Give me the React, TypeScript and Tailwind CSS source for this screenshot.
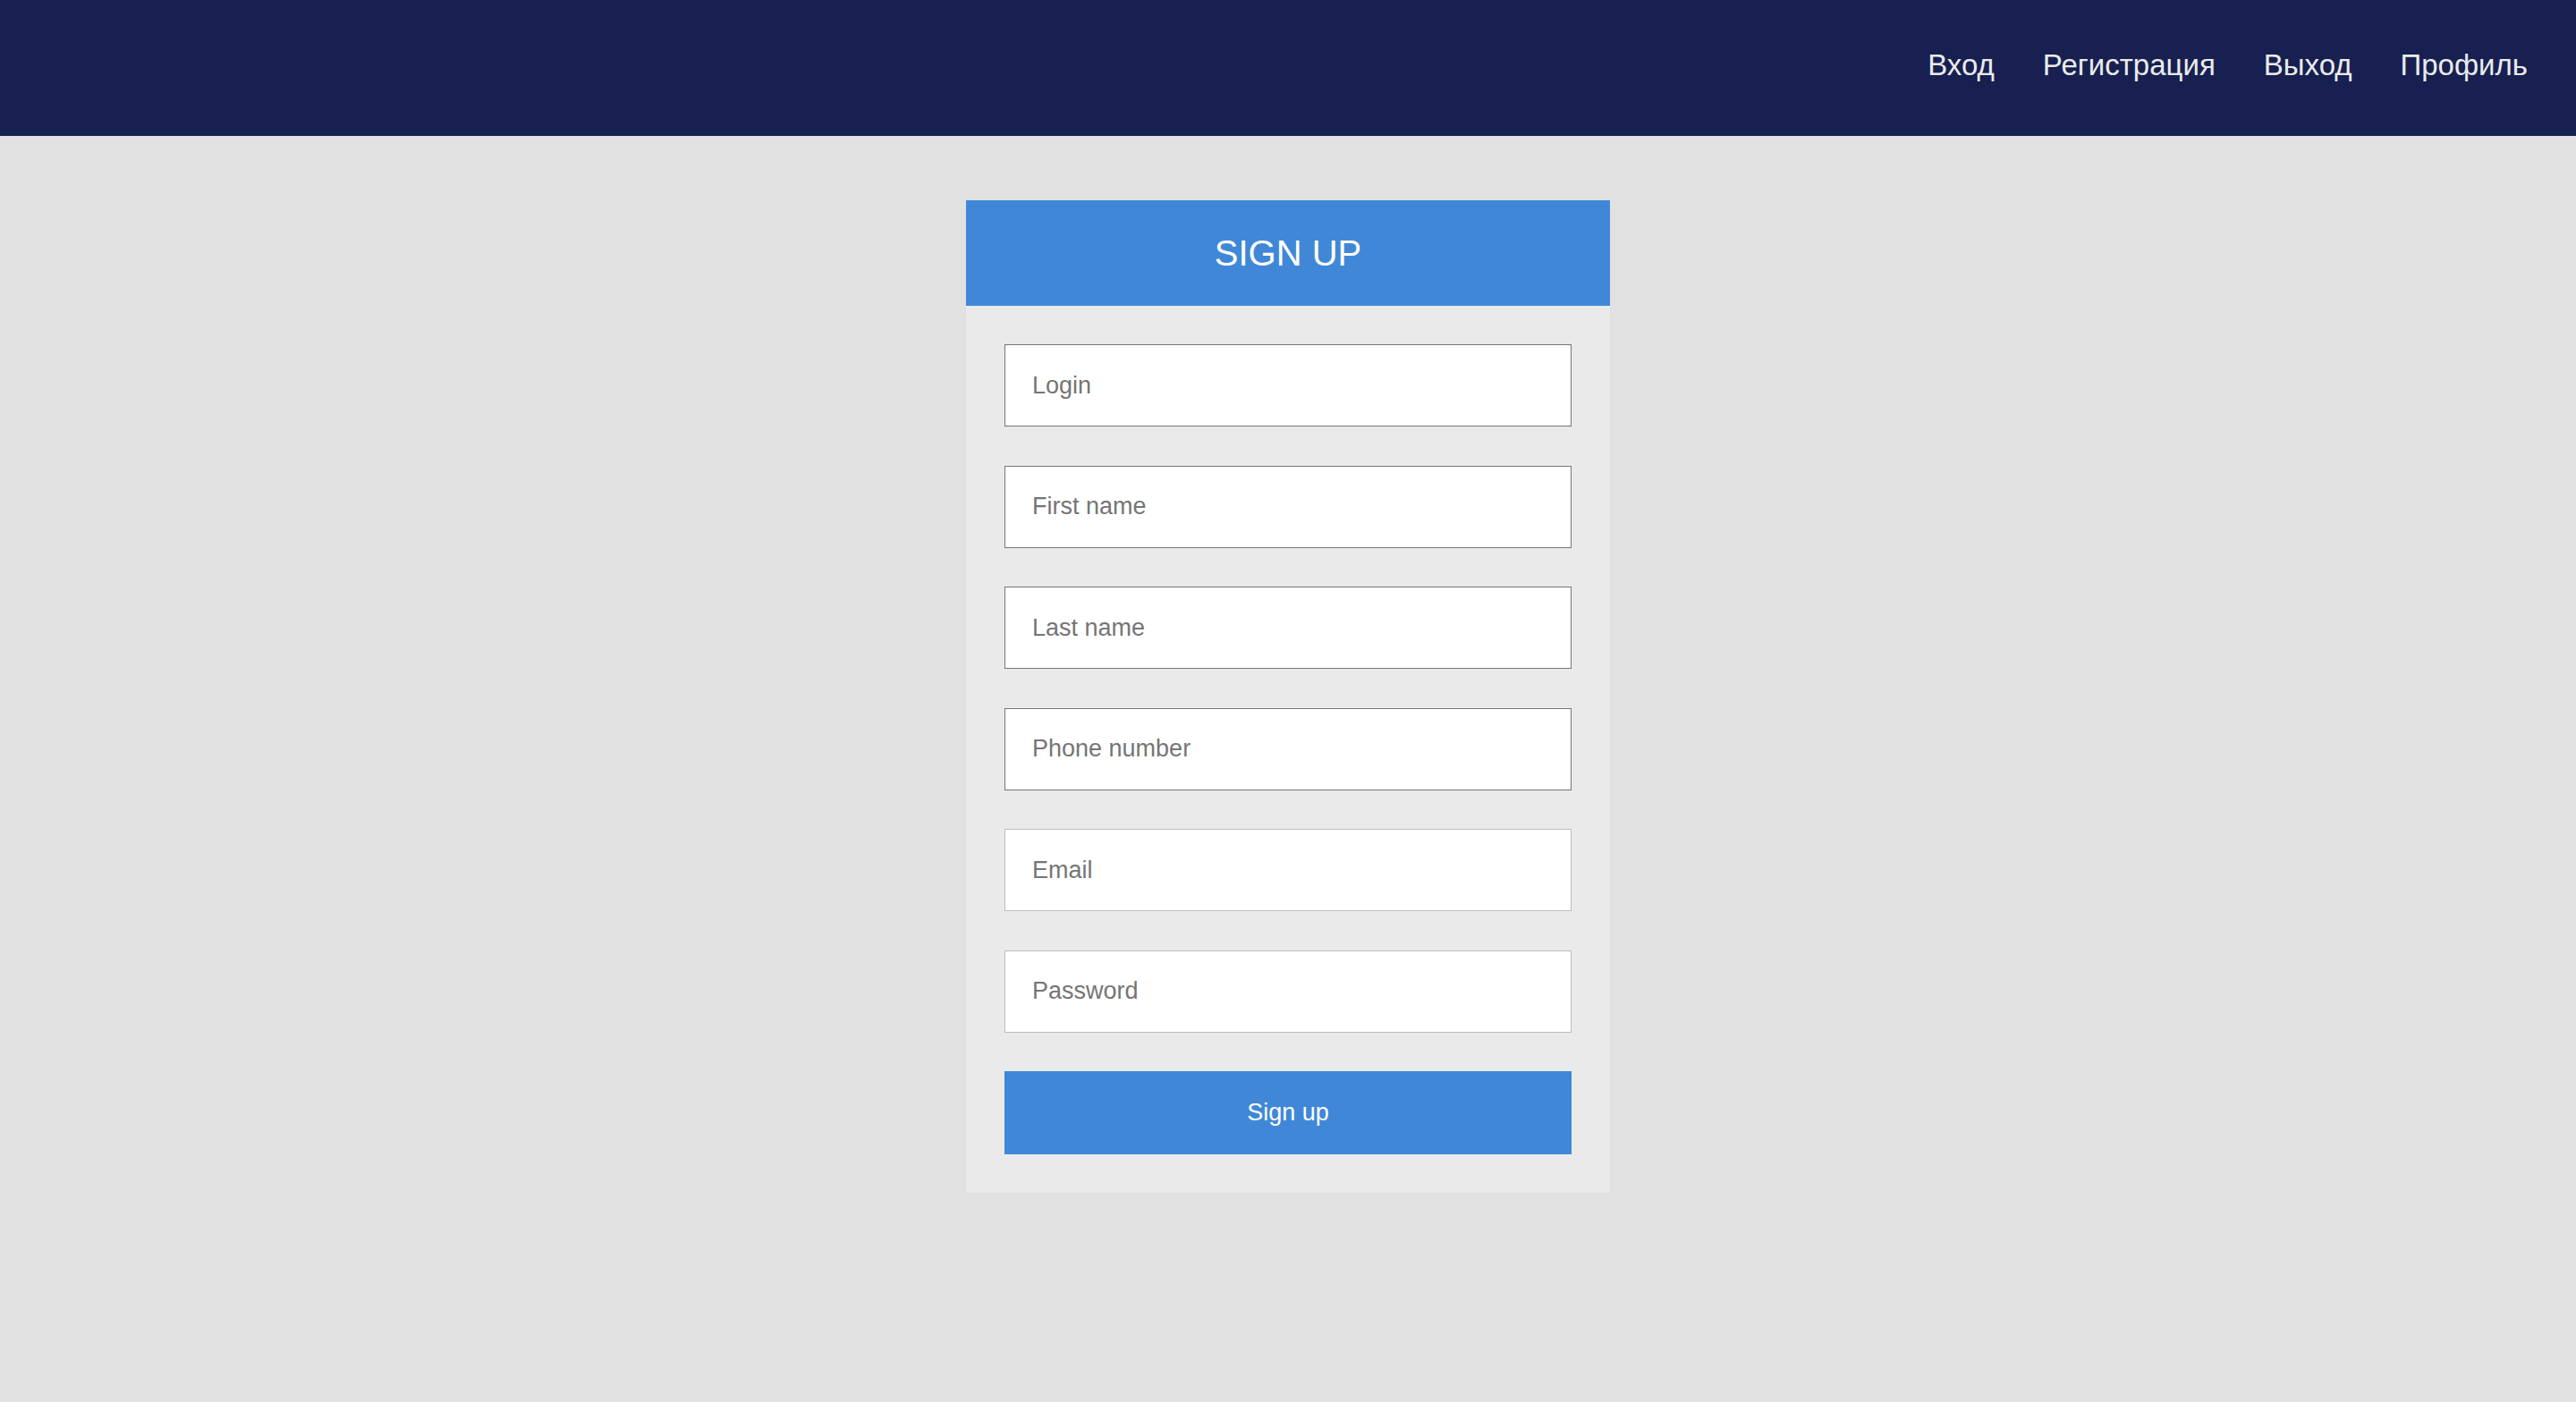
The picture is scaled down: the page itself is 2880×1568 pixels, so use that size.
import { useState } from "react";

const fields = [
  { name: "login", label: "Login", type: "text", dark: true },
  { name: "firstName", label: "First name", type: "text", dark: true },
  { name: "lastName", label: "Last name", type: "text", dark: true },
  { name: "phone", label: "Phone number", type: "tel", dark: true },
  { name: "email", label: "Email", type: "email", dark: false },
  { name: "password", label: "Password", type: "password", dark: false },
];

const links = ["Вход", "Регистрация", "Выход", "Профиль"];

export default function App() {
  const [values, setValues] = useState<Record<string, string>>({});

  return (
    <div className="min-h-screen bg-[#e1e1e1] font-['Liberation_Sans',Arial,sans-serif]">
      <header className="flex h-[152px] items-center justify-end bg-[#172051] pr-[27px]">
        <nav className="flex items-center text-[33px] text-[#ebebeb]">
          {links.map((l) => (
            <a key={l} href="#" className="px-[27px] pb-[7px]">
              {l}
            </a>
          ))}
        </nav>
      </header>

      <main className="flex justify-center pt-[72px]">
        <form
          className="w-[720px] bg-[#eaeaea]"
          onSubmit={(e) => e.preventDefault()}
        >
          <div className="flex h-[118px] items-center justify-center bg-[#4088d7] text-[40px] text-white">
            SIGN UP
          </div>

          <div className="flex flex-col gap-[43.5px] p-[43px]">
            {fields.map((f) => (
              <input
                key={f.name}
                type={f.type}
                placeholder={f.label}
                value={values[f.name] ?? ""}
                onChange={(e) => setValues({ ...values, [f.name]: e.target.value })}
                className={
                  f.dark
                    ? "h-[92px] w-full border border-[#767676] bg-white px-[30px] text-[27px] text-[#333] outline-none placeholder:text-[#757575]"
                    : "h-[92px] w-full border border-[#bdbdbd] bg-white px-[30px] text-[27px] text-[#333] outline-none placeholder:text-[#757575]"
                }
              />
            ))}

            <button
              type="submit"
              className="h-[93px] w-full bg-[#4088d7] text-[27px] text-white"
            >
              Sign up
            </button>
          </div>
        </form>
      </main>
    </div>
  );
}
